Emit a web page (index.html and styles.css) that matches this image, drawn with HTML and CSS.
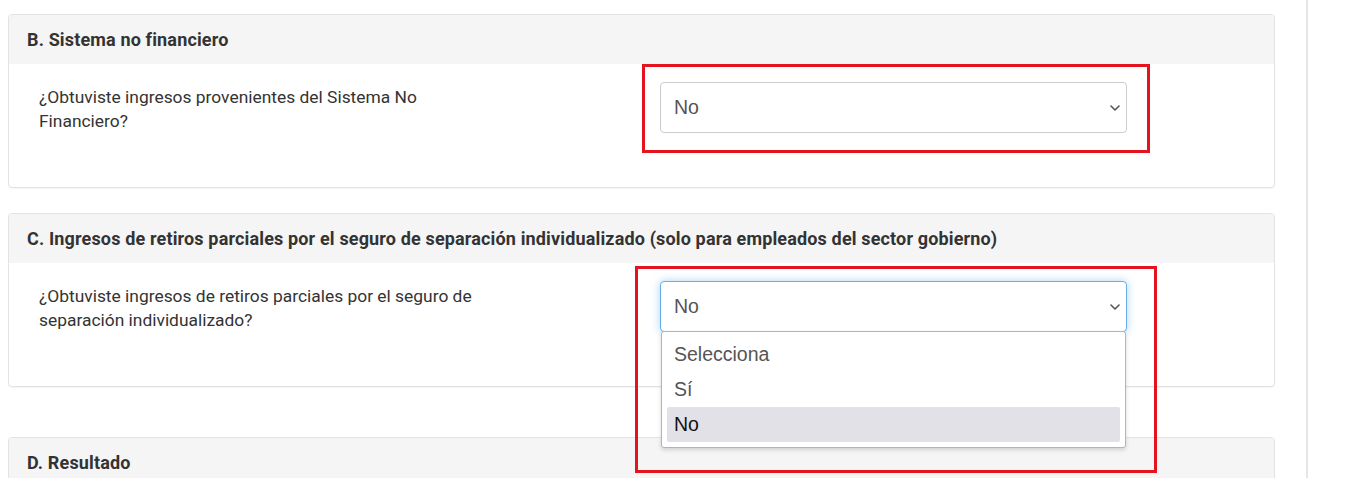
FILE: index.html
```html
<!DOCTYPE html>
<html lang="es">
<head>
    <meta charset="UTF-8">
    <meta name="viewport" content="width=device-width, initial-scale=1.0">
    <title>Ingresos</title>
    <link rel="stylesheet" href="styles.css">
</head>
<body>
    <div class="page">
        <main class="content">
            <section class="card">
                <div class="card-header">B. Sistema no financiero</div>
                <div class="card-body">
                    <p class="question">¿Obtuviste ingresos provenientes del Sistema No Financiero?</p>
                    <div class="field">
                        <div class="select">
                            <span>No</span>
                            <svg class="chevron" width="10" height="6" viewBox="0 0 10 6" fill="none" stroke="currentColor" stroke-width="1.6" stroke-linecap="round" stroke-linejoin="round">
                                <polyline points="1 1 5 5 9 1"></polyline>
                            </svg>
                        </div>
                        <div class="mark mark-b"></div>
                    </div>
                </div>
            </section>

            <section class="card card-c">
                <div class="card-header">C. Ingresos de retiros parciales por el seguro de separación individualizado (solo para empleados del sector gobierno)</div>
                <div class="card-body">
                    <p class="question">¿Obtuviste ingresos de retiros parciales por el seguro de separación individualizado?</p>
                    <div class="field">
                        <div class="select focus">
                            <span>No</span>
                            <svg class="chevron" width="10" height="6" viewBox="0 0 10 6" fill="none" stroke="currentColor" stroke-width="1.6" stroke-linecap="round" stroke-linejoin="round">
                                <polyline points="1 1 5 5 9 1"></polyline>
                            </svg>
                        </div>
                        <ul class="options">
                            <li>Selecciona</li>
                            <li>Sí</li>
                            <li class="active">No</li>
                        </ul>
                        <div class="mark mark-c"></div>
                    </div>
                </div>
            </section>

            <section class="card card-d">
                <div class="card-header">D. Resultado</div>
                <div class="card-body"></div>
            </section>
        </main>
    </div>
</body>
</html>
```

FILE: styles.css
```css
html, body {
    margin: 0;
    padding: 0;
    background: #fff;
}

body {
    font-family: Roboto, "Liberation Sans", sans-serif;
    color: #333;
}

.page {
    width: 1306px;
    height: 478px;
    overflow: hidden;
    border-right: 2px solid #e6e6e6;
}

.content {
    padding: 14px 31px 0 8px;
}

/* Cards */
.card {
    border: 1px solid #e3e3e3;
    border-radius: 4px;
    background: #fff;
    box-shadow: 0 1px 1px rgba(0, 0, 0, 0.04);
}

.card-c {
    margin-top: 25px;
}

.card-d {
    margin-top: 50px;
}

.card-header {
    height: 49px;
    display: flex;
    align-items: center;
    padding: 0 18px;
    background: #f5f5f5;
    font-size: 18px;
    font-weight: 700;
    letter-spacing: 0.15px;
    color: #333;
    border-radius: 3px 3px 0 0;
}

.card-body {
    display: flex;
    height: 123px;
    padding: 0 0 0 30px;
}

.card-d .card-body {
    height: 60px;
}

.question {
    width: 460px;
    margin: 21px 0 0 0;
    font-size: 17.4px;
    line-height: 24px;
    color: #333;
}

/* Select */
.field {
    position: relative;
    margin: 18px 0 0 161px;
    width: 467px;
}

.select {
    box-sizing: border-box;
    height: 51px;
    display: flex;
    align-items: center;
    justify-content: space-between;
    padding: 0 6px 0 13px;
    border: 1px solid #ccc;
    border-radius: 4px;
    font-family: "Liberation Sans", Arial, sans-serif;
    font-size: 19.5px;
    color: #555;
    background: #fff;
}

.select.focus {
    border-color: #66afe9;
    box-shadow: 0 0 8px rgba(102, 175, 233, 0.55);
}

.chevron {
    color: #555;
}

.options {
    position: absolute;
    top: 50px;
    left: 1px;
    right: 1px;
    margin: 0;
    padding: 5px;
    list-style: none;
    background: #fff;
    border: 1px solid #b4b4b4;
    border-radius: 3px;
    box-shadow: 0 2px 4px rgba(0, 0, 0, 0.15);
    z-index: 5;
}

.options li {
    height: 35px;
    line-height: 35px;
    padding-left: 7px;
    font-family: "Liberation Sans", Arial, sans-serif;
    font-size: 19.5px;
    color: #555;
}

.options li.active {
    background: #e1e1e7;
    border-radius: 2px;
    color: #111;
}

/* Red annotation boxes */
.mark {
    position: absolute;
    border: 3px solid #e5131d;
    z-index: 6;
}

.mark-b {
    left: -18px;
    top: -18px;
    width: 502px;
    height: 83px;
}

.mark-c {
    left: -25px;
    top: -15px;
    width: 516px;
    height: 201px;
}
```
